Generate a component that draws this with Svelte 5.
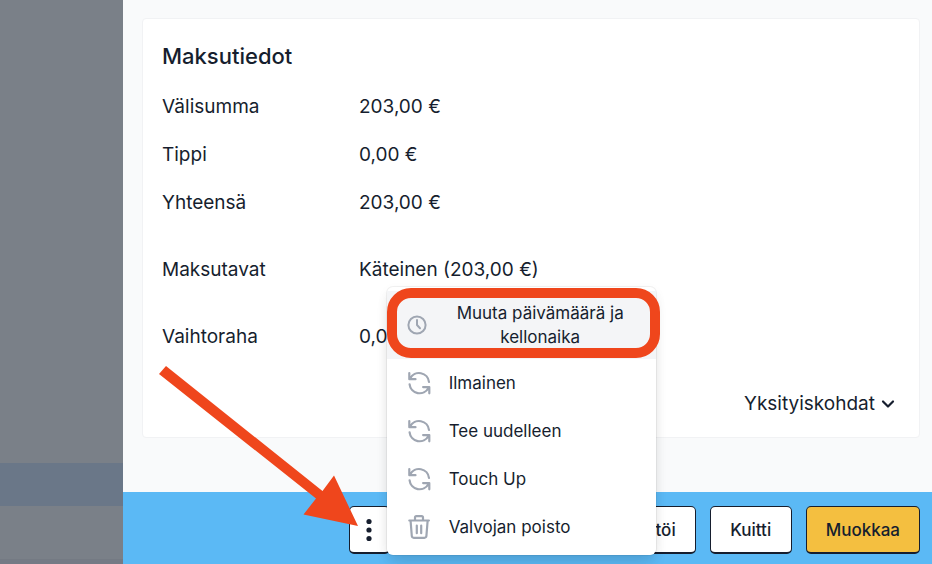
<script lang="ts">
  type Icon = 'clock' | 'refresh' | 'trash';

  const payment = [
    { label: 'Välisumma', value: '203,00 €' },
    { label: 'Tippi', value: '0,00 €' },
    { label: 'Yhteensä', value: '203,00 €' },
    { label: 'Maksutavat', value: 'Käteinen (203,00 €)', spaced: true },
    { label: 'Vaihtoraha', value: '0,00 €', spaced: true },
  ];

  const actions: { label: string; icon: Icon }[] = [
    { label: 'Muuta päivämäärä ja kellonaika', icon: 'clock' },
    { label: 'Ilmainen', icon: 'refresh' },
    { label: 'Tee uudelleen', icon: 'refresh' },
    { label: 'Touch Up', icon: 'refresh' },
    { label: 'Valvojan poisto', icon: 'trash' },
  ];

  let open = $state(true);
  let selected = $state(0);
</script>

<div class="page">
  <div class="backdrop">
    <div class="row fill"></div>
    <div class="row active"></div>
    <div class="row"></div>
    <div class="row edge"></div>
  </div>

  <main class="panel">
    <div class="body">
      <section class="card">
        <h2>Maksutiedot</h2>
        <dl>
          {#each payment as p}
            <div class="line" class:spaced={p.spaced}>
              <dt>{p.label}</dt>
              <dd>{p.value}</dd>
            </div>
          {/each}
        </dl>
        <button type="button" class="details">
          Yksityiskohdat
          <svg width="14" height="14" viewBox="0 0 14 14" aria-hidden="true">
            <path d="M2 4.5l5 5 5-5" />
          </svg>
        </button>
      </section>
    </div>

    <footer class="bar">
      <div class="more">
        <button type="button" class="btn dots" aria-label="Lisää" onclick={() => (open = !open)}>
          <svg width="6" height="24" viewBox="0 0 6 24" aria-hidden="true">
            <circle cx="3" cy="3.5" r="2.6" />
            <circle cx="3" cy="12" r="2.6" />
            <circle cx="3" cy="20.5" r="2.6" />
          </svg>
        </button>

        {#if open}
          <div class="menu">
            {#each actions as a, i}
              <button type="button" class="item" class:selected={i === selected} onclick={() => (selected = i)}>
                {#if a.icon === 'clock'}
                  <svg class="icon" width="20" height="20" viewBox="0 0 20 20" aria-hidden="true">
                    <circle cx="10" cy="10" r="8.6" />
                    <path d="M10 5v5l3 3.2" />
                  </svg>
                {:else if a.icon === 'refresh'}
                  <svg class="icon" width="24" height="24" viewBox="0 0 24 24" aria-hidden="true">
                    <path d="M2.3 2v6.2h6.2M22 11A10 10 0 0 0 3.2 7.4" />
                    <path d="M22.3 22.3v-6.200h-6.200M2.600 13.300a10 10 0 0 0 18.800 3.600" />
                  </svg>
                {:else}
                  <svg class="icon" width="24" height="24" viewBox="0 0 24 24" aria-hidden="true">
                    <path d="M2.3 5.5h19.6M8 5V2.6q0-1.4 1.4-1.4h5.2q1.4 0 1.4 1.4V5" />
                    <path d="M3.6 6l1.200 15q.2 1.800 2 1.800h10.600q1.800 0 2-1.800L20.600 6M9.800 10.600v7.600M14.200 10.600v7.600" />
                  </svg>
                {/if}
                <span>{a.label}</span>
              </button>
            {/each}
            <div class="ring"></div>
          </div>
        {/if}

        <svg class="arrow" width="199" height="160" viewBox="0 0 199 160" aria-hidden="true">
          <path d="M7 0L163.5 125L175 109.5L199 160L144.5 148.5L157 132.5L0 8Z" />
        </svg>
      </div>
      <button type="button" class="btn wide">töi</button>
      <button type="button" class="btn">Kuitti</button>
      <button type="button" class="btn primary">Muokkaa</button>
    </footer>
  </main>
</div>

<style>
  :global(body) {
    margin: 0;
    background: #f9fafb;
  }

  .page {
    display: grid;
    grid-template-columns: 123px 1fr;
    min-height: 100vh;
    overflow: hidden;
    font-family: Inter, 'Liberation Sans', sans-serif;
    font-size: 19px;
    color: #161e2e;
  }

  .backdrop {
    display: flex;
    flex-direction: column;
    background: #7a8088;
  }

  .row {
    height: 53px;
    border-bottom: 1px solid #747a83;
  }

  .row.fill {
    flex: 1;
    border: 0;
  }

  .row.active {
    height: 43px;
    border: 0;
    background: #6a7788;
  }

  .row.edge {
    height: 4px;
    border: 0;
    background: #757a86;
  }

  .panel {
    display: flex;
    flex-direction: column;
    min-width: 0;
  }

  .body {
    flex: 1;
    padding: 18px 12px 20px 19px;
    background: #f9fafb;
  }

  .card {
    display: flex;
    flex-direction: column;
    padding: 23px 20px 9px 19px;
    border: 1px solid #f1f2f4;
    border-radius: 4px;
    background: #fff;
  }

  h2 {
    margin: 0 0 13px;
    font-size: 22px;
    line-height: 28px;
    font-weight: 500;
  }

  dl {
    margin: 0;
  }

  .line {
    display: grid;
    grid-template-columns: 197px 1fr;
    line-height: 48px;
  }

  .line.spaced {
    margin-top: 19px;
  }

  dd {
    margin: 0;
  }

  button {
    font: inherit;
    color: inherit;
    cursor: pointer;
  }

  .details {
    display: flex;
    align-items: center;
    align-self: flex-end;
    gap: 6px;
    margin-top: 19px;
    padding: 0 4px 0 0;
    border: 0;
    background: none;
    line-height: 48px;
  }

  .details svg {
    fill: none;
    stroke: currentColor;
    stroke-width: 2.2;
    stroke-linecap: round;
    stroke-linejoin: round;
  }

  .bar {
    display: flex;
    justify-content: flex-end;
    gap: 14px;
    padding: 14px 12px 10px;
    background: #5bb9f5;
  }

  .btn {
    min-width: 82px;
    height: 48px;
    padding: 0 19px;
    border: 1px solid #161e2e;
    border-bottom-width: 2px;
    border-radius: 5px;
    background: #fff;
    font-size: 17px;
    font-weight: 500;
  }

  .btn.primary {
    background: #f4bf40;
  }

  .btn.wide {
    width: 292px;
    text-align: right;
  }

  .btn.dots {
    display: flex;
    align-items: center;
    justify-content: center;
    min-width: 41px;
    padding: 0;
  }

  .dots svg {
    fill: currentColor;
  }

  .more {
    position: relative;
  }

  .menu {
    position: absolute;
    left: 38px;
    bottom: -1px;
    z-index: 2;
    width: 269px;
    padding: 4px 0;
    border-radius: 6px;
    background: #fff;
    box-shadow:
      0 0 0 1px rgba(0, 0, 0, 0.05),
      0 10px 15px -3px rgba(0, 0, 0, 0.1),
      0 4px 12px rgba(0, 0, 0, 0.06);
  }

  .item {
    display: flex;
    align-items: center;
    gap: 18px;
    width: 100%;
    padding: 12px 20px;
    border: 0;
    background: none;
    font-size: 17px;
    line-height: 24px;
  }

  .item.selected {
    padding: 10px 20px;
    background: #f4f5f7;
  }

  .item.selected span {
    flex: 1;
  }

  .icon {
    flex: none;
    fill: none;
    stroke: #9fa6b2;
    stroke-width: 2.2;
    stroke-linecap: round;
    stroke-linejoin: round;
  }

  .selected .icon {
    stroke-width: 2;
  }

  /* Callout around the first menu entry. */
  .ring {
    position: absolute;
    inset: 1px -4px auto 0;
    height: 50px;
    border: 10px solid #ef461c;
    border-radius: 24px;
    pointer-events: none;
  }

  .arrow {
    position: absolute;
    left: -190px;
    bottom: 28px;
    z-index: 3;
    fill: #ef461c;
    pointer-events: none;
  }
</style>
